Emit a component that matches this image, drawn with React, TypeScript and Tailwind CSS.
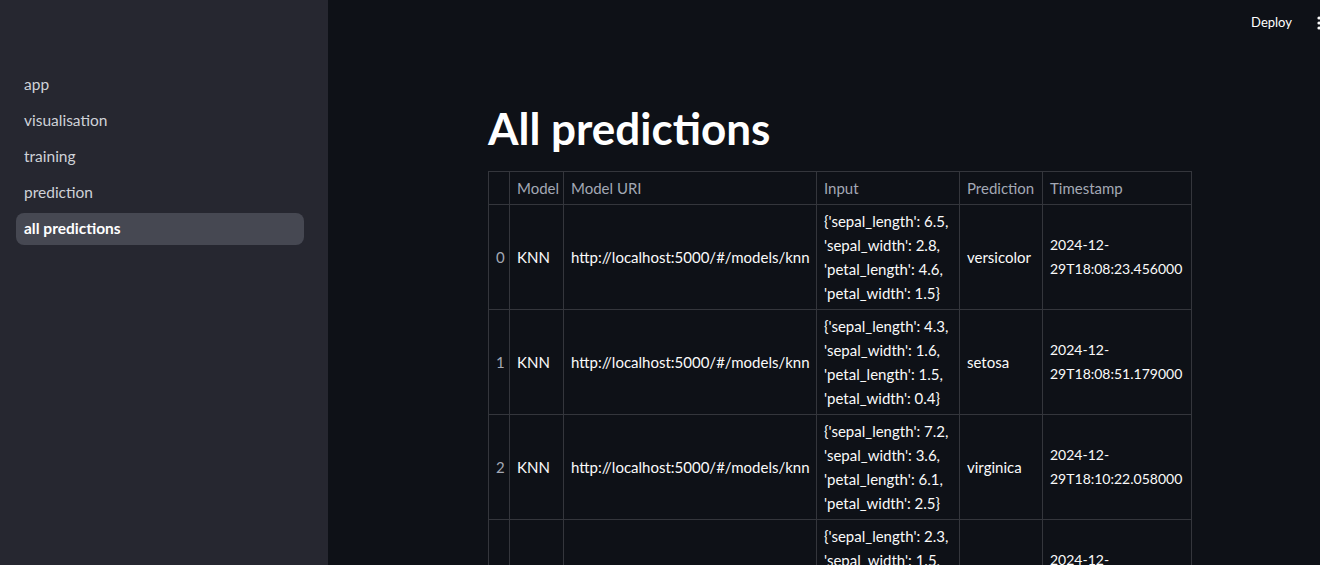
import type { JSX } from 'react'

const pages = ['app', 'visualisation', 'training', 'prediction', 'all predictions']

const rows = [
  {
    i: 0,
    input: ["{'sepal_length': 6.5,", "'sepal_width': 2.8,", "'petal_length': 4.6,", "'petal_width': 1.5}"],
    pred: 'versicolor',
    ts: '29T18:08:23.456000',
  },
  {
    i: 1,
    input: ["{'sepal_length': 4.3,", "'sepal_width': 1.6,", "'petal_length': 1.5,", "'petal_width': 0.4}"],
    pred: 'setosa',
    ts: '29T18:08:51.179000',
  },
  {
    i: 2,
    input: ["{'sepal_length': 7.2,", "'sepal_width': 3.6,", "'petal_length': 6.1,", "'petal_width': 2.5}"],
    pred: 'virginica',
    ts: '29T18:10:22.058000',
  },
  {
    i: 3,
    input: ["{'sepal_length': 2.3,", "'sepal_width': 1.5,", "'petal_length': 1.2,", "'petal_width': 0.3}"],
    pred: 'setosa',
    ts: '29T18:11:40.512000',
  },
]

const cell = 'border border-[#34363c] px-[7px] py-[4px] align-middle whitespace-nowrap'

export default function App(): JSX.Element {
  return (
    <div className="flex h-[565px] w-[1320px] overflow-hidden bg-[#0e1117] text-[#fafafa] font-['Lato','Noto_Sans',sans-serif]">
      {/* sidebar */}
      <aside className="w-[328px] shrink-0 bg-[#262730] pt-[69px] pl-4 pr-6">
        <nav className="flex flex-col gap-[4px]">
          {pages.map((p) => (
            <div
              key={p}
              className={
                p === 'all predictions'
                  ? 'h-[32px] rounded-lg bg-[#464852] px-2 flex items-center text-[15.5px] font-bold text-white'
                  : 'h-[32px] rounded-lg px-2 flex items-center text-[15.5px] text-[#cfd2d8]'
              }
            >
              {p}
            </div>
          ))}
        </nav>
      </aside>

      {/* main */}
      <main className="relative flex-1">
        <header className="flex h-[44px] items-center justify-end gap-[24px] pt-[2px]">
          <span className="text-[13px] text-white">Deploy</span>
          <svg width="6" height="16" viewBox="0 0 6 16" className="-mr-[2px]">
            <circle cx="3" cy="3" r="1.6" fill="#fafafa" />
            <circle cx="3" cy="8" r="1.6" fill="#fafafa" />
            <circle cx="3" cy="13" r="1.6" fill="#fafafa" />
          </svg>
        </header>

        <div className="ml-[160px] w-[704px]">
          <h1 className="mt-[56px] text-[44px] font-bold leading-[56px] text-white">All predictions</h1>

          <table className="mt-[15px] w-[703px] table-fixed border-collapse text-[15px] leading-[24px]">
            <colgroup>
              <col className="w-[21px]" />
              <col className="w-[54px]" />
              <col className="w-[253px]" />
              <col className="w-[143px]" />
              <col className="w-[83px]" />
              <col className="w-[149px]" />
            </colgroup>
            <thead>
              <tr className="text-left text-[#a3a8b4]">
                <th className={`${cell} font-normal`} />
                <th className={`${cell} font-normal`}>Model</th>
                <th className={`${cell} font-normal`}>Model URI</th>
                <th className={`${cell} font-normal`}>Input</th>
                <th className={`${cell} font-normal`}>Prediction</th>
                <th className={`${cell} font-normal`}>Timestamp</th>
              </tr>
            </thead>
            <tbody>
              {rows.map((r) => (
                <tr key={r.i}>
                  <td className={`${cell} text-center text-[#a3a8b4]`}>{r.i}</td>
                  <td className={cell}>KNN</td>
                  <td className={cell}>http://localhost:5000/#/models/knn</td>
                  <td className={cell}>
                    {r.input.map((l) => (
                      <div key={l}>{l}</div>
                    ))}
                  </td>
                  <td className={cell}>{r.pred}</td>
                  <td className={`${cell} text-[14px]`}>
                    <div>2024-12-</div>
                    <div>{r.ts}</div>
                  </td>
                </tr>
              ))}
            </tbody>
          </table>
        </div>
      </main>
    </div>
  )
}
